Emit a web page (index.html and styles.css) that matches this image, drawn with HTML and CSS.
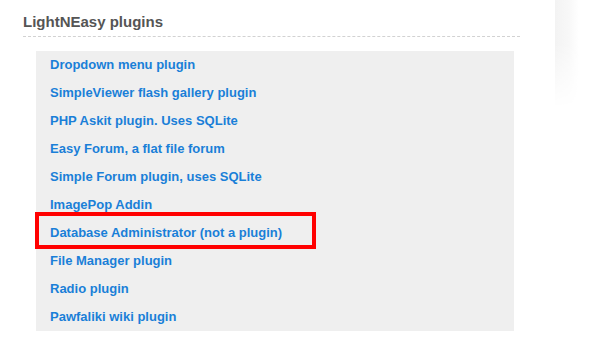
FILE: index.html
```html
<!DOCTYPE html>
<html lang="en">
<head>
  <meta charset="UTF-8">
  <meta name="viewport" content="width=device-width, initial-scale=1">
  <title>LightNEasy plugins</title>

  <link rel="stylesheet" href="styles.css">
</head>

<body>

  <div class="page">
    <div class="plugins">
      <h2 class="plugins-title">LightNEasy plugins</h2>

      <ul class="plugin-list">
        <li><a href="#">Dropdown menu plugin</a></li>
        <li><a href="#">SimpleViewer flash gallery plugin</a></li>
        <li><a href="#">PHP Askit plugin. Uses SQLite</a></li>
        <li><a href="#">Easy Forum, a flat file forum</a></li>
        <li><a href="#">Simple Forum plugin, uses SQLite</a></li>
        <li><a href="#">ImagePop Addin</a></li>
        <li class="marked"><a href="#">Database Administrator (not a plugin)</a></li>
        <li><a href="#">File Manager plugin</a></li>
        <li><a href="#">Radio plugin</a></li>
        <li><a href="#">Pawfaliki wiki plugin</a></li>
      </ul>
    </div>

    <div class="side-shadow"></div>
  </div>

</body>
</html>
```

FILE: styles.css
```css
body {
  margin: 0;
  background: #fff;
  font-family: "Liberation Sans", Arial, sans-serif;
}

.page {
  position: relative;
  height: 354px;
}

.plugins {
  width: 497px;
  padding-left: 23px;
}

.plugins-title {
  margin: 0;
  padding: 13px 0 5px;
  font-size: 15px;
  line-height: 18px;
  font-weight: bold;
  color: #555;
  border-bottom: 1px dashed #d2d2d2;
}

.plugin-list {
  list-style: none;
  margin: 14px 0 0 13px;
  padding: 0;
  width: 478px;
  background: #efefef;
}

.plugin-list li {
  position: relative;
  padding-left: 14px;
  line-height: 28px;
  font-size: 13px;
  font-weight: bold;
}

.plugin-list a {
  color: #1a7fd8;
  text-decoration: none;
}

/* red annotation frame */
.plugin-list li.marked::after {
  content: "";
  position: absolute;
  left: -1px;
  top: -7px;
  width: 281px;
  height: 37px;
  box-sizing: border-box;
  border: 4px solid #f00;
}

/* faint shadow strip on the right edge */
.side-shadow {
  position: absolute;
  left: 555px;
  top: 0;
  width: 24px;
  height: 108px;
  background: linear-gradient(to right, #f3f3f3, #f8f8f8 60%, #fff);
  -webkit-mask-image: linear-gradient(to bottom, #000 40%, transparent);
  mask-image: linear-gradient(to bottom, #000 40%, transparent);
}
```
